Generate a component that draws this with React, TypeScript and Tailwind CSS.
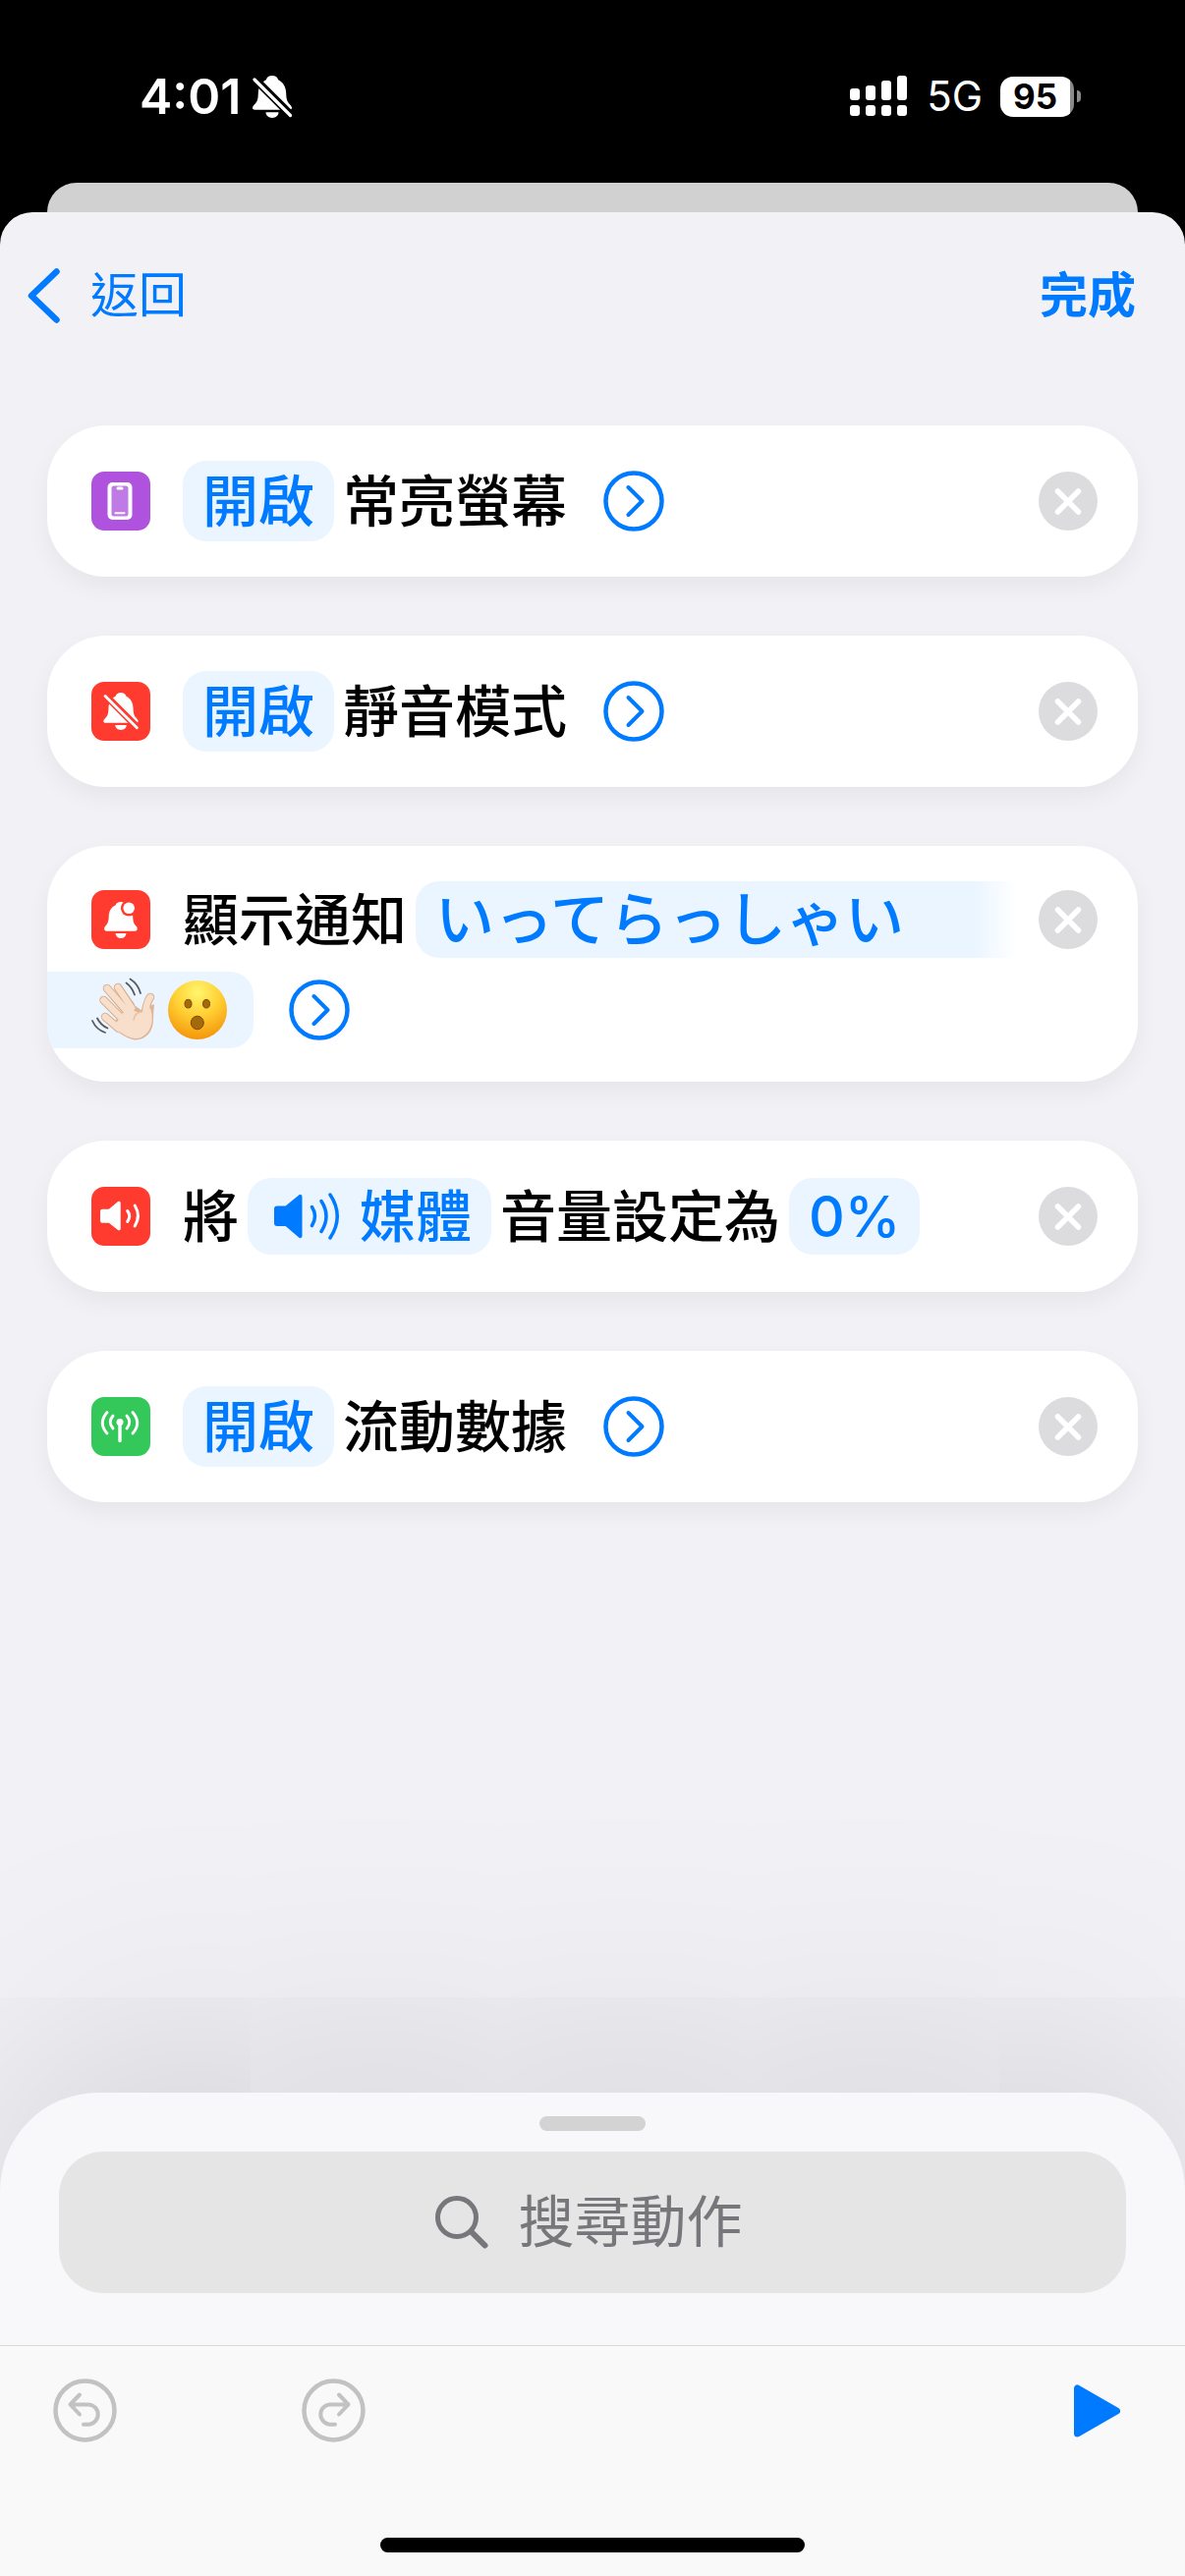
import type { ReactNode } from "react";

type ActionKind = "toggle" | "notification" | "volume";

interface ShortcutAction {
  id: number;
  kind: ActionKind;
  label: string;
  icon: ReactNode;
}

function BellSlash({ className, gap }: { className: string; gap: string }) {
  return (
    <svg className={className} viewBox="0 0 40 43" fill="currentColor" aria-hidden="true">
      <path d="M20 0c3.2 0 5.5 1.6 6.2 4.2C31 6.5 34 11 34.2 18c.2 6 1 8.5 3.500 11C39 30.500 40 31.500 40 33c0 1-1 1.700-2.500 1.700h-35C1 34.700 0 34 0 33c0-1.500 1-2.500 2.300-4C5 26.500 5.600 24 5.800 18 6 11 9 6.500 13.800 4.200 14.500 1.600 16.800 0 20 0Z" />
      <path d="M13.500 37.300h13c0 3.200-2.800 5.600-6.500 5.600s-6.500-2.400-6.500-5.600Z" />
      <path d="M0 1 40 41" stroke={gap} strokeWidth="8" />
      <path d="M2 4 38.500 40.500" stroke="currentColor" strokeWidth="3.200" strokeLinecap="round" />
    </svg>
  );
}

function PhoneTile() {
  return (
    <svg className="size-[60px]" viewBox="0 0 60 60" fill="none" aria-hidden="true">
      <rect x="16.500" y="11" width="25" height="38" rx="5" fill="#fff" />
      <rect x="20.500" y="14.500" width="17" height="31" rx="2.500" fill="#c07ae6" />
      <rect x="25.500" y="15.500" width="7" height="3" rx="1.500" fill="#fff" />
      <path d="M24.500 42.300h9" stroke="#fff" strokeWidth="2" strokeLinecap="round" />
    </svg>
  );
}

function BellBadgeTile() {
  return (
    <svg className="size-[60px]" viewBox="0 0 60 60" fill="#fff" aria-hidden="true">
      <path d="M30 12c3 0 5 1.400 5.500 3.500C40 17.500 42 21 42.200 27c.2 5 1 7 3 9.300 1 1.200 1.500 2 1.500 3.200 0 1.300-.9 2.200-2.400 2.200H15.500c-1.500 0-2.400-.9-2.400-2.200 0-1.200.5-2 1.500-3.200 2-2.300 2.900-4.300 3.100-9.300C18 21 20 17.500 24.500 15.500 25 13.400 27 12 30 12Z" />
      <path d="M24.500 44h11c-.4 3-2.500 5-5.500 5s-5.100-2-5.500-5Z" />
      <circle cx="38.200" cy="18.300" r="8.300" fill="#ff3b30" />
      <circle cx="38.200" cy="18.300" r="5.800" />
    </svg>
  );
}

function SpeakerTile() {
  return (
    <svg className="size-[60px]" viewBox="0 0 60 60" fill="none" stroke="#fff" strokeLinecap="round" strokeLinejoin="round" aria-hidden="true">
      <path d="M11 23.500h7L27.500 15.500Q29 15 29 16.500v26q0 1.500-1.500 1L18 36h-7q-1.200 0-1.200-1.200V24.700q0-1.200 1.200-1.200Z" fill="#fff" strokeWidth="1.500" />
      <path d="M36.700 24.500q4 5.500 0 11M44.200 19q6.500 10.500 0 21" strokeWidth="3" />
    </svg>
  );
}

function AntennaTile() {
  return (
    <svg className="size-[60px]" viewBox="0 0 60 60" fill="none" stroke="#fff" strokeWidth="2.900" strokeLinecap="round" aria-hidden="true">
      <circle cx="29" cy="25.500" r="3.500" fill="#fff" stroke="none" />
      <path d="M29 26v18.500" strokeWidth="3.400" />
      <path d="M22 19q-5.500 6.500 0 13M36 19q5.500 6.500 0 13M16 15.500q-9.500 11 0 21.500M42 15.500q9.500 11 0 21.500" />
    </svg>
  );
}

function SpeakerWave() {
  return (
    <svg className="h-12 w-[74px]" viewBox="-7 0 74 48" fill="none" stroke="currentColor" strokeLinecap="round" strokeLinejoin="round" aria-hidden="true">
      <path d="M3 14.500h9L26 3q1.500-.5 1.500 1v40q0 1.500-1.500 1L12 33H3q-2 0-2-2V16.500q0-2 2-2Z" fill="currentColor" strokeWidth="2" />
      <path d="M38.500 14.500q6 9.500 0 19M48 8.500q10 15.500 0 31M57 2q14.500 22 0 44" strokeWidth="3.500" />
    </svg>
  );
}

function WavingHand() {
  return (
    <svg className="size-[66px]" viewBox="0 0 66 66" fill="none" strokeLinecap="round" strokeLinejoin="round" role="img" aria-label="👋🏻">
      <g stroke="#d9aa88" strokeWidth="8.500">
        <path d="m27 10 13 19" />
        <path d="m16 11 18 21" />
        <path d="m12.500 23 17 17" />
        <path d="m14 40 14 12" />
        <path d="M60 20q-3 4-5 14" />
      </g>
      <path d="M21 49 38 24l12.500 9L64 27q-1 8-1 16c0 12-8 21-19 20.500C36 62 28 57 21 49Z" fill="#dfb496" />
      <g stroke="#f7dfcb" strokeWidth="6.600">
        <path d="m27 10 14 21" />
        <path d="m16 11 20 23" />
        <path d="m12.500 23 18 18" />
        <path d="m14 40 14 12" />
        <path d="M60 20q-4 5-5 16" />
      </g>
      <path d="M23 49.500 37 29q9 8 14.500 6.500L60 31q2 6 1.800 12C61 54 54 62.500 44 62c-8-1-15-6-21-12.500Z" fill="#f7dfcb" />
      <path d="M52 34q-8 2-9 9" stroke="#e6bfa4" strokeWidth="1.400" />
      <path d="M39.500 1.500q8 5 10.500 14.500M35.500 5.500q6 4.500 8.500 12M6 41.500q3.500 7 10.500 10M1 44q4 9 13 12" stroke="#5a5a5c" strokeWidth="1.800" />
    </svg>
  );
}

function SurprisedFace() {
  return (
    <svg className="size-[60px]" viewBox="0 0 60 60" role="img" aria-label="😮">
      <defs>
        <radialGradient id="face" cx="0.500" cy="0.200" r="0.800">
          <stop offset="0" stopColor="#fff66e" />
          <stop offset="0.500" stopColor="#ffcf33" />
          <stop offset="1" stopColor="#f5960a" />
        </radialGradient>
      </defs>
      <circle cx="30" cy="30" r="30" fill="url(#face)" />
      <g fill="#a3690b" stroke="#7b4b04" strokeWidth="1">
        <ellipse cx="20.500" cy="23.700" rx="3.500" ry="4.300" />
        <ellipse cx="39" cy="23.700" rx="3.500" ry="4.300" />
        <ellipse cx="29.800" cy="43" rx="6.500" ry="6.800" />
      </g>
    </svg>
  );
}

function ExpandButton() {
  return (
    <button type="button" aria-label="顯示更多" className="shrink-0 text-[#007aff]">
      <svg className="size-[62px]" viewBox="0 0 62 62" fill="none" stroke="currentColor" strokeWidth="4.500" strokeLinecap="round" strokeLinejoin="round">
        <circle cx="31" cy="31" r="28.500" />
        <path d="m25.500 17 14 14-14 14" strokeWidth="4" />
      </svg>
    </button>
  );
}

function RemoveButton() {
  return (
    <button type="button" aria-label="移除" className="ml-auto shrink-0">
      <svg className="size-[60px]" viewBox="0 0 60 60" fill="none" strokeLinecap="round">
        <circle cx="30" cy="30" r="30" fill="#dcdcde" />
        <path d="m19.500 20 21 21M40.500 20l-21 21" stroke="#fff" strokeWidth="5.500" />
      </svg>
    </button>
  );
}

function Tile({ className, children }: { className: string; children: ReactNode }) {
  return (
    <span className={`mr-6 flex size-[60px] shrink-0 items-center justify-center rounded-[13px] text-white ${className}`}>
      {children}
    </span>
  );
}

const actions: ShortcutAction[] = [
  { id: 1, kind: "toggle", label: "常亮螢幕", icon: <Tile className="bg-[#af52de]"><PhoneTile /></Tile> },
  { id: 2, kind: "toggle", label: "靜音模式", icon: <Tile className="bg-[#ff3b30]"><BellSlash className="h-[38px] w-9" gap="#ff3b30" /></Tile> },
  { id: 3, kind: "notification", label: "顯示通知", icon: <Tile className="bg-[#ff3b30]"><BellBadgeTile /></Tile> },
  { id: 4, kind: "volume", label: "音量設定為", icon: <Tile className="bg-[#ff3b30]"><SpeakerTile /></Tile> },
  { id: 5, kind: "toggle", label: "流動數據", icon: <Tile className="bg-[#34c759]"><AntennaTile /></Tile> },
];

const cardClass = "overflow-hidden rounded-[60px] bg-white pl-[45px] pr-[41px] shadow-[0_10px_24px_rgba(0,0,0,0.05)]";

function ActionCard({ action }: { action: ShortcutAction }) {
  if (action.kind === "notification") {
    return (
      <li className={`${cardClass} flex flex-col gap-[14px] pt-9 pb-[34px]`}>
        <div className="flex h-[78px] items-center gap-[9px]">
          {action.icon}
          <span className="shrink-0">{action.label}</span>
          <button type="button" className="mr-[14px] h-[78px] min-w-0 flex-1 rounded-l-[24px] bg-linear-to-r from-[#eaf5ff] from-93% to-white pl-5 text-left text-[60px] text-[#007aff]">
            いってらっしゃい
          </button>
          <RemoveButton />
        </div>
        <div className="flex items-center gap-9">
          <button type="button" className="-ml-[45px] flex h-[78px] items-center gap-3 rounded-r-[24px] bg-[#eaf5ff] pr-[27px] pl-[45px]">
            <WavingHand />
            <SurprisedFace />
          </button>
          <ExpandButton />
        </div>
      </li>
    );
  }

  if (action.kind === "volume") {
    return (
      <li className={`${cardClass} py-9`}>
        <div className="flex h-[82px] items-center gap-[9px]">
          {action.icon}
          <span>將</span>
          <button type="button" className="flex h-[78px] items-center gap-5 rounded-[24px] bg-[#eaf5ff] px-5 text-[#007aff]">
            <SpeakerWave />
            媒體
          </button>
          <span>{action.label}</span>
          <button type="button" className="h-[78px] rounded-[24px] bg-[#eaf5ff] px-5 text-[#007aff]">0%</button>
          <RemoveButton />
        </div>
      </li>
    );
  }

  return (
    <li className={`${cardClass} py-9`}>
      <div className="flex h-[82px] items-center gap-[9px]">
        {action.icon}
        <button type="button" className="h-[82px] rounded-[24px] bg-[#eaf5ff] px-5 text-[#007aff]">開啟</button>
        <span className="mr-7">{action.label}</span>
        <ExpandButton />
        <RemoveButton />
      </div>
    </li>
  );
}

function StatusBar() {
  return (
    <div className="flex h-[186px] items-center justify-between pt-[10px] pr-[106px] pl-[142px] text-white">
      <div className="flex items-center gap-3">
        <span className="text-[50px] leading-none font-semibold">4:01</span>
        <BellSlash className="h-[43px] w-10" gap="#000" />
      </div>
      <div className="flex items-center gap-[18px]">
        <svg className="h-[42px] w-[60px]" viewBox="0 0 60 42" fill="currentColor" aria-hidden="true">
          <rect x="0" y="13" width="10" height="12" rx="3" />
          <rect x="16" y="10" width="10" height="15" rx="3" />
          <rect x="32" y="5" width="10" height="20" rx="3" />
          <rect x="48" y="0" width="10" height="25" rx="3" />
          <rect x="0" y="30" width="10" height="11" rx="3" />
          <rect x="16" y="30" width="10" height="11" rx="3" />
          <rect x="32" y="30" width="10" height="11" rx="3" />
          <rect x="48" y="30" width="10" height="11" rx="3" />
        </svg>
        <span className="text-[42px] leading-none">5G</span>
        <div className="flex items-center gap-[3px]">
          <span className="flex h-[41px] w-[75px] items-center justify-center rounded-[13px] bg-linear-to-r from-white from-95% to-[#8a8a8a] to-95% pr-1 text-[35px] leading-none font-bold text-black">95</span>
          <span className="h-3 w-1 rounded-r-full bg-[#8a8a8a]" />
        </div>
      </div>
    </div>
  );
}

export default function App() {
  return (
    <div className="flex min-h-screen flex-col bg-black font-['Inter','Noto_Sans_CJK_TC',sans-serif]">
      <StatusBar />
      <div className="mx-12 h-[30px] rounded-t-[30px] bg-[#d1d1d1]" />

      <main className="flex flex-1 flex-col overflow-hidden rounded-t-[33px] bg-[#f2f1f6]">
        <header className="flex h-[169px] items-center justify-between pr-[50px] pl-7 text-[49px] leading-none text-[#007aff]">
          <button type="button" className="flex items-center gap-[30px]">
            <svg className="h-14 w-[34px]" viewBox="0 0 34 56" fill="none" stroke="currentColor" strokeWidth="6.500" strokeLinecap="round" strokeLinejoin="round" aria-hidden="true">
              <path d="M29.500 3.500 4 28l25.500 24.500" />
            </svg>
            返回
          </button>
          <button type="button" className="font-semibold">完成</button>
        </header>

        <ul className="flex flex-1 flex-col gap-[60px] px-12 pt-12 text-[57px] leading-none font-medium whitespace-nowrap text-black">
          {actions.map((action) => (
            <ActionCard key={action.id} action={action} />
          ))}
        </ul>

        <section className="rounded-t-[100px] bg-[#f8f8fa] shadow-[0_-50px_360px_rgba(0,0,0,0.13)]">
          <div className="px-[60px] pt-6 pb-[53px]">
            <div className="mx-auto mb-[21px] h-[15px] w-[108px] rounded-full bg-[#d3d3d4]" />
            <label className="flex h-36 items-center justify-center gap-[31px] rounded-[45px] bg-[#e5e5e6] pr-1.5 text-[#77777b]">
              <svg className="size-[54px]" viewBox="0 0 54 54" fill="none" stroke="currentColor" strokeLinecap="round" aria-hidden="true">
                <circle cx="22" cy="22" r="19.500" strokeWidth="5" />
                <path d="m36.500 36.500 14 14" strokeWidth="6" />
              </svg>
              <input type="text" aria-label="搜尋動作" placeholder="搜尋動作" className="h-[84px] w-[230px] bg-transparent text-[57px] outline-none placeholder:text-[#77777b]" />
            </label>
          </div>

          <footer className="border-t border-[#d9d9db] bg-[#f9f9f9] pt-[33px] pb-6">
            <div className="flex items-center pr-[66px] pl-[54px] text-[#c2c2c2]">
              <button type="button" aria-label="還原" className="mr-[188px]">
                <svg className="size-[65px]" viewBox="0 0 65 65" fill="none" stroke="currentColor" strokeWidth="4.500" strokeLinecap="round" strokeLinejoin="round">
                  <circle cx="32.500" cy="32.500" r="30" />
                  <path d="M27 16.500 17.500 26.400 27 36.500M17.500 26.400h19a10.200 10.200 0 0 1 0 20.300h-5.500" strokeWidth="4" />
                </svg>
              </button>
              <button type="button" aria-label="重做">
                <svg className="size-[65px]" viewBox="0 0 65 65" fill="none" stroke="currentColor" strokeWidth="4.500" strokeLinecap="round" strokeLinejoin="round">
                  <circle cx="32.500" cy="32.500" r="30" />
                  <path d="M38 16.500 47.500 26.400 38 36.500M47.500 26.400h-19a10.200 10.200 0 0 0 0 20.300h5.500" strokeWidth="4" />
                </svg>
              </button>
              <button type="button" aria-label="執行" className="ml-auto text-[#007aff]">
                <svg className="h-[54px] w-[47px]" viewBox="0 0 47 54" fill="currentColor" stroke="currentColor" strokeWidth="7" strokeLinejoin="round">
                  <path d="M3.500 4v46L43.500 27Z" />
                </svg>
              </button>
            </div>
            <div className="mx-auto mt-[97px] h-[15px] w-[432px] rounded-full bg-black" />
          </footer>
        </section>
      </main>
    </div>
  );
}
